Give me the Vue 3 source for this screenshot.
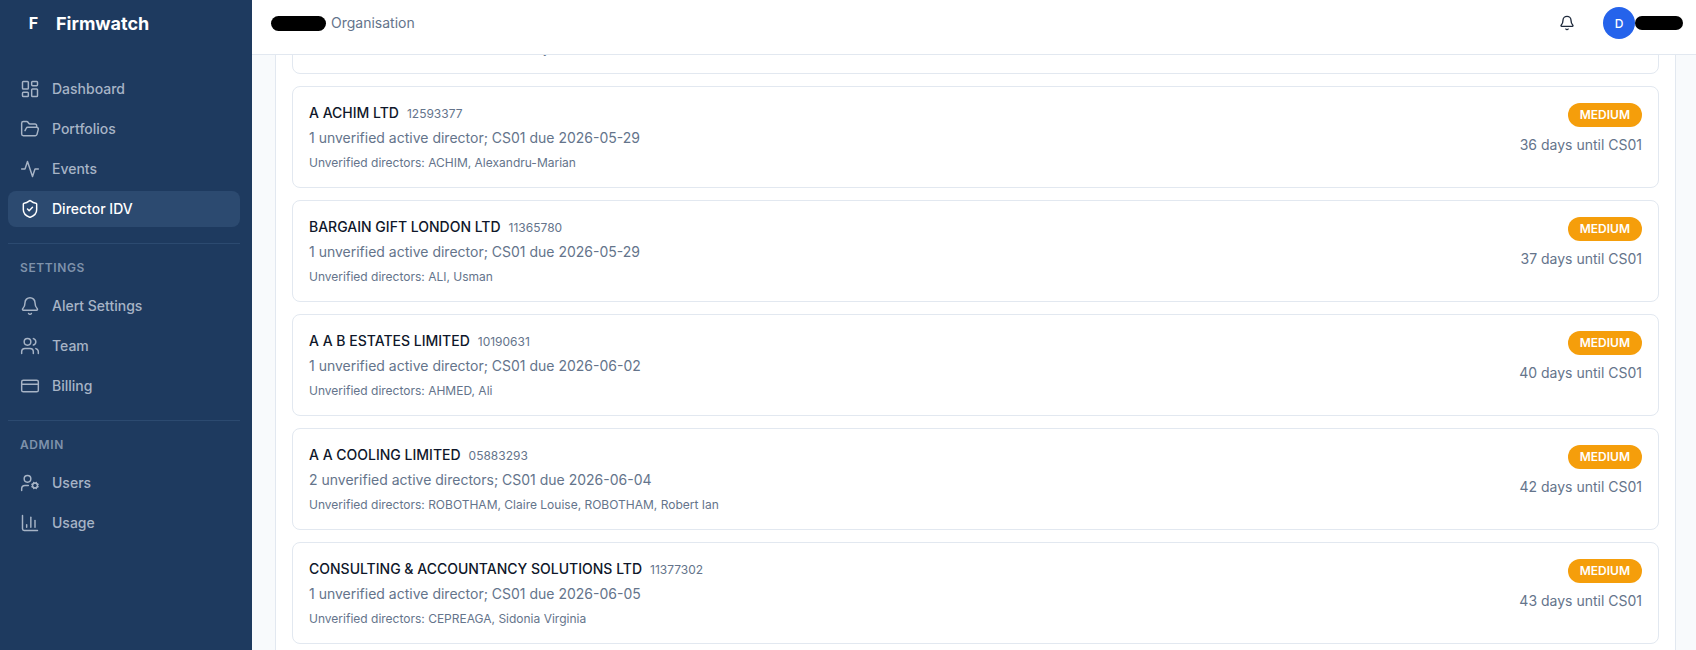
<script setup>
import { ref, onMounted } from 'vue'

const scroller = ref(null)

const mainNav = [
  { label: 'Dashboard', icon: 'dashboard' },
  { label: 'Portfolios', icon: 'folder' },
  { label: 'Events', icon: 'activity' },
  { label: 'Director IDV', icon: 'shield', active: true },
]
const settingsNav = [
  { label: 'Alert Settings', icon: 'bell' },
  { label: 'Team', icon: 'users' },
  { label: 'Billing', icon: 'card' },
]
const adminNav = [
  { label: 'Users', icon: 'usercog' },
  { label: 'Usage', icon: 'chart' },
]

const icons = {
  dashboard: '<rect x="3" y="3" width="7" height="9" rx="1"/><rect x="14" y="3" width="7" height="5" rx="1"/><rect x="14" y="12" width="7" height="9" rx="1"/><rect x="3" y="16" width="7" height="5" rx="1"/>',
  folder: '<path d="m6 14 1.5-2.9A2 2 0 0 1 9.24 10H20a2 2 0 0 1 1.94 2.5l-1.54 6a2 2 0 0 1-1.95 1.5H4a2 2 0 0 1-2-2V5a2 2 0 0 1 2-2h3.9a2 2 0 0 1 1.69.9l.81 1.2a2 2 0 0 0 1.67.9H18a2 2 0 0 1 2 2v2"/>',
  activity: '<path d="M22 12h-4l-3 9L9 3l-3 9H2"/>',
  shield: '<path d="M20 13c0 5-3.5 7.5-7.66 8.95a1 1 0 0 1-.67-.01C7.5 20.5 4 18 4 13V6a1 1 0 0 1 1-1c2 0 4.5-1.2 6.24-2.72a1.17 1.17 0 0 1 1.52 0C14.51 3.81 17 5 19 5a1 1 0 0 1 1 1z"/><path d="m9 12 2 2 4-4"/>',
  bell: '<path d="M10.268 21a2 2 0 0 0 3.464 0"/><path d="M3.262 15.326A1 1 0 0 0 4 17h16a1 1 0 0 0 .74-1.673C19.41 13.956 18 12.499 18 8A6 6 0 0 0 6 8c0 4.499-1.411 5.956-2.738 7.326"/>',
  users: '<path d="M16 21v-2a4 4 0 0 0-4-4H6a4 4 0 0 0-4 4v2"/><path d="M16 3.128a4 4 0 0 1 0 7.744"/><path d="M22 21v-2a4 4 0 0 0-3-3.87"/><circle cx="9" cy="7" r="4"/>',
  card: '<rect x="2" y="5" width="20" height="14" rx="2"/><path d="M2 10h20"/>',
  usercog: '<path d="M10 15H6a4 4 0 0 0-4 4v2"/><path d="m14.305 16.53.923-.382"/><path d="m15.228 13.852-.923-.383"/><path d="m16.852 12.228-.383-.923"/><path d="m16.852 17.772-.383.924"/><path d="m19.148 12.228.383-.923"/><path d="m19.53 18.696-.382-.924"/><path d="m20.772 13.852.924-.383"/><path d="m20.772 16.148.924.383"/><circle cx="18" cy="15" r="3"/><circle cx="9" cy="7" r="4"/>',
  chart: '<path d="M3 3v16a2 2 0 0 0 2 2h16"/><path d="M18 17V9"/><path d="M13 17V5"/><path d="M8 17v-3"/>',
}

const rows = [
  { name: 'A A LIMITED', number: '00000000', summary: '1 unverified active director; CS01 due 2026-05-28', names: 'Unverified directors: HUSSAIN, Martin Roy', days: '35 days until CS01' },
  { name: 'A ACHIM LTD', number: '12593377', summary: '1 unverified active director; CS01 due 2026-05-29', names: 'Unverified directors: ACHIM, Alexandru-Marian', days: '36 days until CS01' },
  { name: 'BARGAIN GIFT LONDON LTD', number: '11365780', summary: '1 unverified active director; CS01 due 2026-05-29', names: 'Unverified directors: ALI, Usman', days: '37 days until CS01' },
  { name: 'A A B ESTATES LIMITED', number: '10190631', summary: '1 unverified active director; CS01 due 2026-06-02', names: 'Unverified directors: AHMED, Ali', days: '40 days until CS01' },
  { name: 'A A COOLING LIMITED', number: '05883293', summary: '2 unverified active directors; CS01 due 2026-06-04', names: 'Unverified directors: ROBOTHAM, Claire Louise, ROBOTHAM, Robert Ian', days: '42 days until CS01' },
  { name: 'CONSULTING & ACCOUNTANCY SOLUTIONS LTD', number: '11377302', summary: '1 unverified active director; CS01 due 2026-06-05', names: 'Unverified directors: CEPREAGA, Sidonia Virginia', days: '43 days until CS01' },
]

onMounted(() => {
  // the page is photographed part way down the list
  scroller.value.scrollTop = 100
})
</script>

<template>
  <div class="shell">
    <aside class="sidebar">
      <div class="brand">
        <span class="brand-mark">F</span>
        <span class="brand-name">Firmwatch</span>
      </div>
      <nav class="nav">
        <a v-for="item in mainNav" :key="item.label" class="nav-item" :class="{ active: item.active }">
          <svg class="nav-icon" viewBox="0 0 24 24" v-html="icons[item.icon]"></svg>
          <span>{{ item.label }}</span>
        </a>
        <div class="divider"></div>
        <div class="nav-title">SETTINGS</div>
        <a v-for="item in settingsNav" :key="item.label" class="nav-item">
          <svg class="nav-icon" viewBox="0 0 24 24" v-html="icons[item.icon]"></svg>
          <span>{{ item.label }}</span>
        </a>
        <div class="divider"></div>
        <div class="nav-title">ADMIN</div>
        <a v-for="item in adminNav" :key="item.label" class="nav-item">
          <svg class="nav-icon" viewBox="0 0 24 24" v-html="icons[item.icon]"></svg>
          <span>{{ item.label }}</span>
        </a>
      </nav>
    </aside>

    <div class="body">
      <header class="topbar">
        <div class="org">
          <span class="blot blot-org"></span>
          <span class="org-name">Organisation</span>
        </div>
        <div class="top-right">
          <svg class="top-bell" viewBox="0 0 24 24" v-html="icons.bell"></svg>
          <div class="user">
            <span class="avatar">D</span>
            <span class="blot blot-user"></span>
          </div>
        </div>
      </header>

      <main ref="scroller" class="content">
        <section class="panel">
          <article v-for="row in rows" :key="row.number" class="row">
            <div class="row-left">
              <div class="row-head">
                <span class="row-name">{{ row.name }}</span>
                <span class="row-number">{{ row.number }}</span>
              </div>
              <div class="row-summary">{{ row.summary }}</div>
              <div class="row-names">{{ row.names }}</div>
            </div>
            <div class="row-right">
              <span class="badge">MEDIUM</span>
              <span class="row-days">{{ row.days }}</span>
            </div>
          </article>
        </section>
      </main>
    </div>
  </div>
</template>

<style>
html, body {
  margin: 0;
  height: 100%;
  overflow: hidden;
}
</style>

<style scoped>
.shell {
  display: flex;
  height: 650px;
  font-family: Inter, "Liberation Sans", sans-serif;
  background: #f8fafc;
}

.sidebar {
  width: 252px;
  flex: none;
  background: #1e3a5f;
}

.brand {
  display: flex;
  align-items: center;
  gap: 10px;
  height: 46px;
  padding-left: 21px;
}

.brand-mark {
  width: 25px;
  text-align: center;
  color: #fff;
  font-size: 16px;
  font-weight: 700;
}

.brand-name {
  color: #fff;
  font-size: 18px;
  font-weight: 700;
}

.nav {
  display: flex;
  flex-direction: column;
  gap: 4px;
  padding: 25px 12px 0 8px;
}

.nav-item {
  display: flex;
  align-items: center;
  gap: 12px;
  height: 36px;
  padding-left: 12px;
  border-radius: 8px;
  color: #a7b4c6;
  font-size: 14px;
  font-weight: 500;
}

.nav-item span {
  margin-bottom: 2px;
}

.nav-item.active {
  background: #2c4a70;
  color: #fff;
}

.nav-icon {
  width: 20px;
  height: 20px;
  fill: none;
  stroke: currentColor;
  stroke-width: 1.75;
  stroke-linecap: round;
  stroke-linejoin: round;
  flex: none;
}

.divider {
  height: 1px;
  background: #2c4a70;
  margin-top: 12px;
}

.nav-title {
  padding: 12px 0 8px 12px;
  color: #7f92ab;
  font-size: 12px;
  font-weight: 600;
  letter-spacing: 0.6px;
  line-height: 16px;
}

.body {
  flex: 1;
  min-width: 0;
  display: flex;
  flex-direction: column;
}

.topbar {
  flex: none;
  display: flex;
  align-items: center;
  justify-content: space-between;
  background: #fff;
  border-bottom: 1px solid #e2e8f0;
  padding: 0 13px 8px 19px;
  margin-bottom: -8px;
  height: 46px;
  position: relative;
  z-index: 1;
}

.org {
  display: flex;
  align-items: center;
  gap: 5px;
  color: #64748b;
  font-size: 14px;
}

.org-name {
  margin-bottom: 2px;
}

.blot {
  display: block;
  background: #000;
  border-radius: 8px;
}

.blot-org {
  width: 55px;
  height: 15px;
}

.blot-user {
  width: 48px;
  height: 14px;
}

.top-right {
  display: flex;
  align-items: center;
  gap: 28px;
}

.top-bell {
  width: 16px;
  height: 16px;
  fill: none;
  stroke: #1e293b;
  stroke-width: 2;
  stroke-linecap: round;
  stroke-linejoin: round;
}

.user {
  display: flex;
  align-items: center;
}

.avatar {
  width: 32px;
  height: 32px;
  border-radius: 50%;
  background: #2563eb;
  color: #fff;
  font-size: 12px;
  font-weight: 500;
  display: flex;
  align-items: center;
  justify-content: center;
}

.content {
  flex: 1;
  overflow: auto;
  scrollbar-width: none;
  padding: 8px 20px 24px 23px;
}

.panel {
  display: flex;
  flex-direction: column;
  gap: 12px;
  background: #fff;
  border: 1px solid #e2e8f0;
  padding: 16px;
}

.row {
  height: 102px;
  box-sizing: border-box;
  display: flex;
  justify-content: space-between;
  border: 1px solid #e2e8f0;
  border-radius: 8px;
  padding: 16px;
  flex: none;
}

.row-head {
  display: flex;
  align-items: baseline;
  gap: 8px;
  line-height: 20px;
}

.row-name {
  color: #0f172a;
  font-size: 14px;
  font-weight: 450;
}

.row-number {
  color: #64748b;
  font-size: 12px;
}

.row-summary {
  color: #64748b;
  font-size: 14px;
  line-height: 20px;
  margin-top: 4px;
}

.row-names {
  color: #64748b;
  font-size: 12px;
  line-height: 16px;
  margin-top: 7px;
}

.row-right {
  display: flex;
  flex-direction: column;
  align-items: flex-end;
  gap: 8px;
}

.badge {
  background: #f59e0b;
  color: #fff;
  font-size: 12px;
  font-weight: 600;
  line-height: 24px;
  padding: 0 12px;
  border-radius: 12px;
}

.row-days {
  color: #64748b;
  font-size: 14px;
  line-height: 20px;
}
</style>
